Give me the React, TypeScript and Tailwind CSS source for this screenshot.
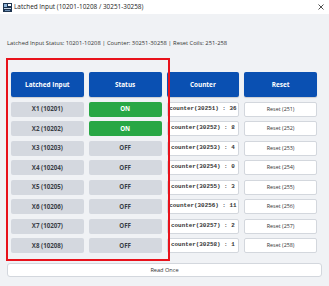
import React from 'react';

const rows = [
  { label: 'X1 (10201)', on: true, counter: 'counter(30251) : 36', reset: 'Reset (251)' },
  { label: 'X2 (10202)', on: true, counter: 'counter(30252) : 8', reset: 'Reset (252)' },
  { label: 'X3 (10203)', on: false, counter: 'counter(30253) : 4', reset: 'Reset (253)' },
  { label: 'X4 (10204)', on: false, counter: 'counter(30254) : 0', reset: 'Reset (254)' },
  { label: 'X5 (10205)', on: false, counter: 'counter(30255) : 3', reset: 'Reset (255)' },
  { label: 'X6 (10206)', on: false, counter: 'counter(30256) : 11', reset: 'Reset (256)' },
  { label: 'X7 (10207)', on: false, counter: 'counter(30257) : 2', reset: 'Reset (257)' },
  { label: 'X8 (10208)', on: false, counter: 'counter(30258) : 1', reset: 'Reset (258)' },
];

const headers = ['Latched Input', 'Status', 'Counter', 'Reset'];

const AppIcon = () => (
  <svg width="9" height="9" viewBox="0 0 9 9">
    <rect x="0" y="0" width="9" height="9" fill="#1f3550" />
    <rect x="1" y="1" width="3" height="3" fill="#8fb4d8" />
    <rect x="5" y="1" width="3" height="2" fill="#ffffff" />
    <rect x="1" y="5" width="7" height="1" fill="#c9d6e4" />
    <rect x="2" y="7" width="5" height="1" fill="#6d8fb3" />
  </svg>
);

export default function App() {
  return (
    <div
      className="relative w-[329px] h-[286px] bg-[#f0f2f5] overflow-hidden"
      style={{ fontFamily: '"Open Sans", "Liberation Sans", sans-serif' }}
    >
      {/* Title bar */}
      <div className="h-[14px] bg-white flex items-center justify-between pl-[3px] pr-[4px]">
        <div className="flex items-center gap-[2px]">
          <AppIcon />
          <span className="text-[6.4px] leading-none text-[#222]">Latched Input (10201-10208 / 30251-30258)</span>
        </div>
        <svg width="6" height="6" viewBox="0 0 6 6" className="mr-[1px]">
          <path d="M0.5 0.5 L5.5 5.5 M5.5 0.5 L0.5 5.5" stroke="#222" strokeWidth="0.8" />
        </svg>
      </div>

      {/* Status line */}
      <div className="pl-[7px] pt-[26px] h-[58px] text-[5.8px] leading-[6px] text-[#333]">
        Latched Input Status: 10201-10208 | Counter: 30251-30258 | Reset Coils: 251-258
      </div>

      {/* Table */}
      <div className="pl-[11px] pr-[12px]">
        <div className="grid grid-cols-4 gap-x-[5px] gap-y-[4.5px]">
          {headers.map((h) => (
            <div
              key={h}
              className="h-[25px] rounded-[2px] bg-[#0a50b2] flex items-center justify-center text-white text-[6.4px] font-bold shadow-[0_1px_1px_rgba(0,0,0,0.15)]"
            >
              {h}
            </div>
          ))}
          {rows.map((r) => (
            <React.Fragment key={r.label}>
              <div className="h-[15px] rounded-[2px] bg-[#d4d8df] flex items-center justify-center text-[6.2px] font-bold text-[#3a3f47]">
                {r.label}
              </div>
              <div
                className={`h-[15px] rounded-[2px] flex items-center justify-center text-[6.2px] font-bold ${
                  r.on ? 'bg-[#28a745] text-white' : 'bg-[#d4d8df] text-[#3a3f47]'
                }`}
              >
                {r.on ? 'ON' : 'OFF'}
              </div>
              <div
                className="h-[15px] rounded-[2px] bg-white border border-[#d3d7dd] flex items-center justify-center text-[5.9px] font-bold text-[#333] whitespace-nowrap"
                style={{ fontFamily: '"Liberation Mono", "DejaVu Sans Mono", monospace' }}
              >
                {r.counter}
              </div>
              <div className="h-[15px] rounded-[2px] bg-white border border-[#d3d7dd] flex items-center justify-center text-[5.4px] text-[#333]">
                {r.reset}
              </div>
            </React.Fragment>
          ))}
        </div>
      </div>

      {/* Read Once */}
      <div className="mt-[10px] ml-[7px] w-[315px] h-[14px] bg-white border border-[#d3d7dd] rounded-[3px] flex items-center justify-center text-[5.6px] text-[#333]">
        Read Once
      </div>

      {/* Highlight annotation */}
      <div className="absolute left-[6px] top-[58px] w-[164px] h-[203px] border-2 border-[#e8121b] pointer-events-none" />
    </div>
  );
}
